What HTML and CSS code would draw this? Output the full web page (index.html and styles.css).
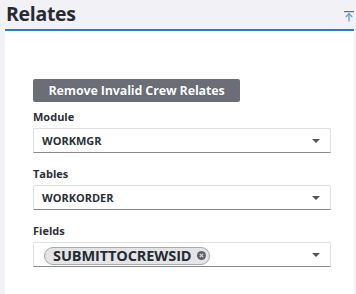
FILE: index.html
```html
<!DOCTYPE html>
<html>
<head>
<meta charset="utf-8">
<link rel="stylesheet" href="styles.css">
</head>
<body>
<div class="header">
  <h1 class="title">Relates</h1>
  <svg class="pin" width="10" height="11" viewBox="0 0 10 11">
    <rect x="0" y="0" width="10" height="1.2" fill="#6b6b6b"/>
    <path d="M5 2.5 L5 10.5" stroke="#5a9bd4" stroke-width="1.3"/>
    <path d="M1.8 6 L5 2.6 L8.2 6" fill="none" stroke="#5a9bd4" stroke-width="1.2"/>
  </svg>
</div>
<div class="panel">
  <button class="btn">Remove Invalid Crew Relates</button>
  <div class="field">
    <div class="label">Module</div>
    <div class="select"><span class="value">WORKMGR</span><span class="caret"></span></div>
  </div>
  <div class="field">
    <div class="label">Tables</div>
    <div class="select"><span class="value">WORKORDER</span><span class="caret"></span></div>
  </div>
  <div class="field">
    <div class="label">Fields</div>
    <div class="select multi">
      <span class="chip">SUBMITTOCREWSID<span class="clear"><svg width="9" height="9" viewBox="0 0 9 9"><circle cx="4.5" cy="4.5" r="4.5" fill="#5f6168"/><path d="M2.8 2.8 L6.2 6.2 M6.2 2.8 L2.8 6.2" stroke="#d9d9d9" stroke-width="1.2"/></svg></span></span>
      <span class="caret"></span>
    </div>
  </div>
</div>
</body>
</html>
```
FILE: styles.css
```css
* { box-sizing: border-box; }
html, body { margin: 0; padding: 0; }
body {
  background: #f1f1f6;
  font-family: "Open Sans", "Noto Sans", sans-serif;
  color: #2b2f36;
  width: 356px;
  height: 294px;
  overflow: hidden;
}
.header {
  height: 29px;
  display: flex;
  align-items: flex-start;
  justify-content: space-between;
  padding: 0 2px 0 6px;
}
.title {
  margin: 0;
  font-size: 19.5px;
  font-weight: 700;
  line-height: 27px;
  letter-spacing: -0.3px;
  color: #262b33;
}
.pin { margin-top: 11px; }
.panel {
  margin: 0 2px 0 5px;
  border-top: 2px solid #2a7dc2;
  background: #fff;
  height: 265px;
  padding: 48px 23px 0 28px;
}
.btn {
  display: block;
  width: 207px;
  height: 23px;
  border: none;
  border-radius: 2px;
  background: #6b6e77;
  color: #fff;
  font-family: "Open Sans", "Noto Sans", sans-serif;
  font-weight: 700;
  font-size: 12.5px;
  letter-spacing: -0.15px;
  padding: 0;
  text-shadow: 0 0 1px rgba(0,0,0,0.3);
  margin-bottom: 7px;
}
.field { margin-bottom: 13px; }
.label {
  font-size: 11px;
  font-weight: 700;
  line-height: 16px;
  margin-bottom: 3px;
  color: #2b2f36;
}
.select {
  height: 25px;
  width: 298px;
  border: 1px solid #e0e0e0;
  border-bottom: 1px solid #8a8a8a;
  border-radius: 2px 2px 0 0;
  display: flex;
  align-items: center;
  justify-content: space-between;
  padding: 0 10px 0 8px;
  background: #fff;
}
.value {
  font-size: 11px;
  font-weight: 700;
  color: #2b2f36;
}
.caret {
  width: 0;
  height: 0;
  border-left: 4px solid transparent;
  border-right: 4px solid transparent;
  border-top: 4px solid #555;
  margin-top: 1px;
}
.multi { padding-left: 10px; }
.chip {
  display: inline-flex;
  align-items: center;
  height: 18px;
  border: 1px solid #a9a9a9;
  border-radius: 9px;
  background: #e5e5e7;
  padding: 0 3px 0 8px;
  font-size: 14.5px;
  font-weight: 700;
  color: #262b33;
  letter-spacing: -0.1px;
  margin-top: 2px;
  white-space: nowrap;
}
.clear {
  display: inline-flex;
  margin-left: 6px;
}
```
